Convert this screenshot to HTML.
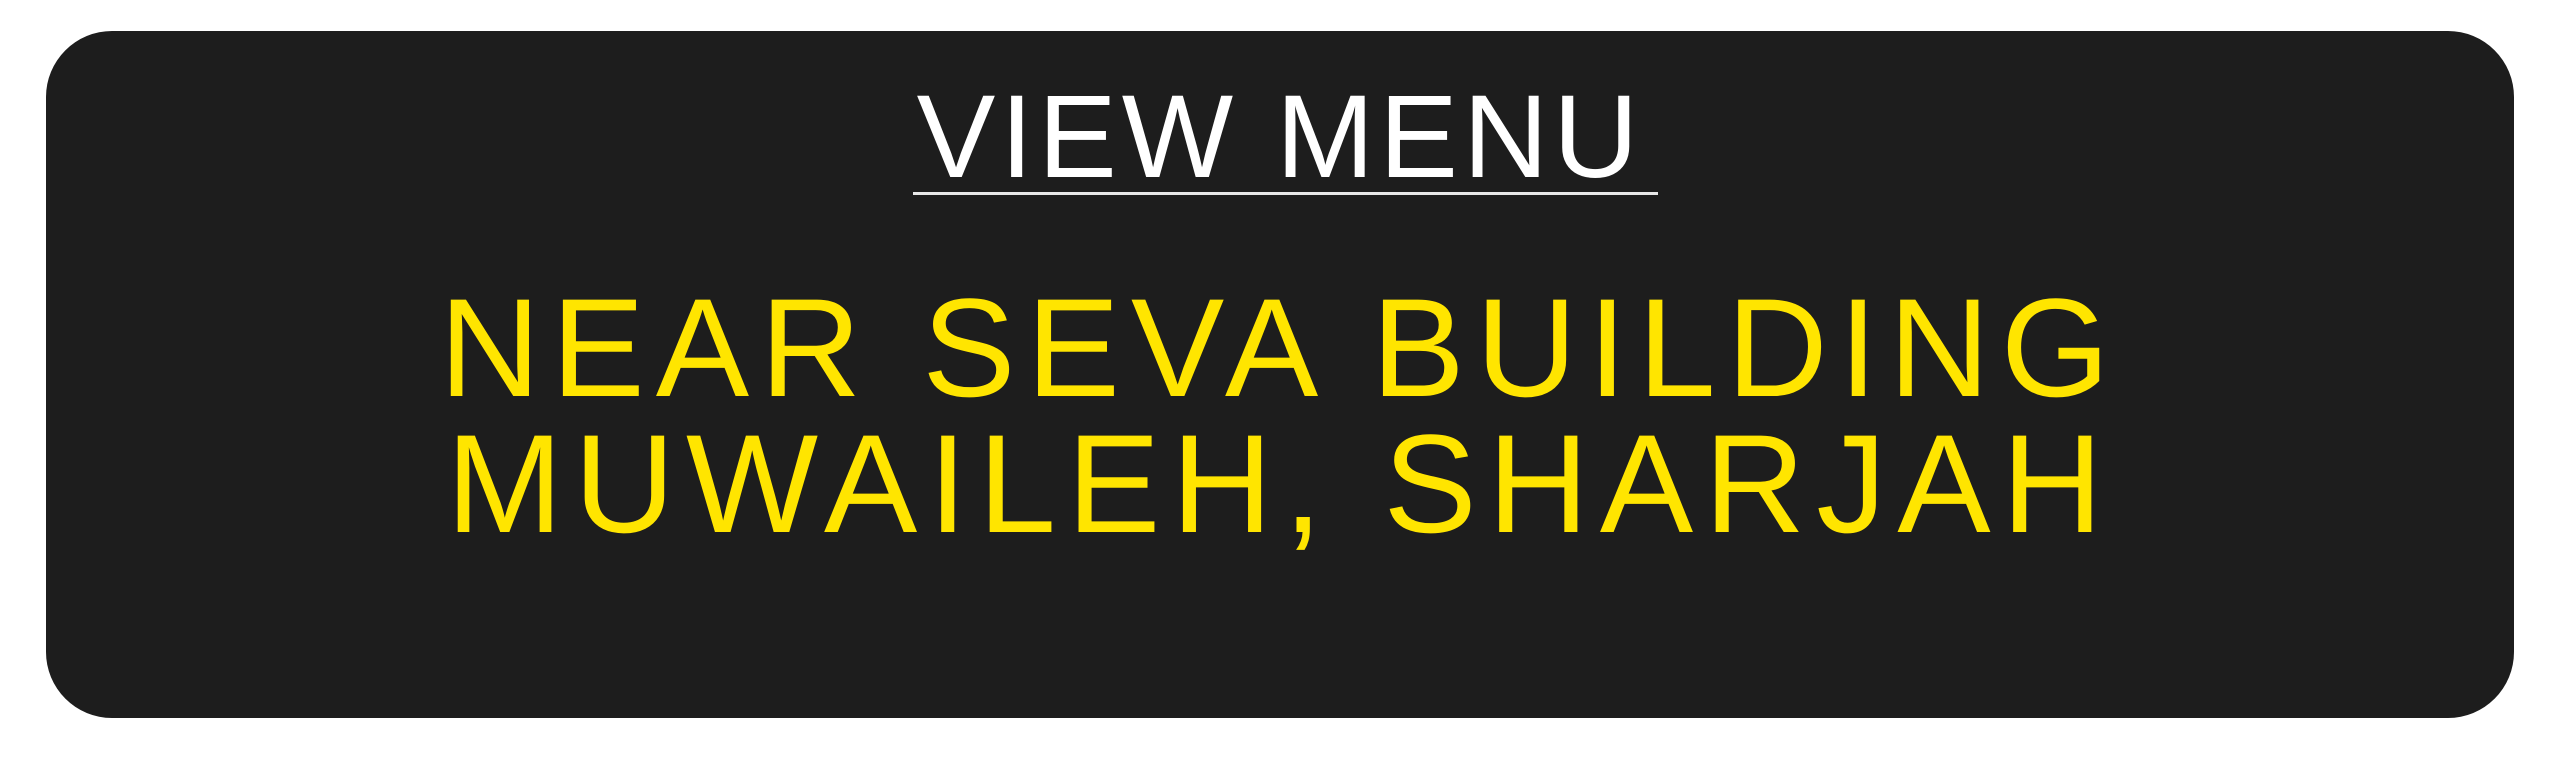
<!DOCTYPE html>
<html><head><style>
html,body{margin:0;padding:0;background:#fff;width:2560px;height:759px;overflow:hidden}
.box{position:absolute;left:46px;top:31px;width:2468px;height:687px;background:#1d1d1d;border-radius:66px}
.t{position:absolute;left:0;width:2560px;text-align:center;font-family:"Liberation Sans",sans-serif;white-space:nowrap;line-height:1}
.vm{top:78px;font-size:118px;color:#fff;letter-spacing:5px}
.ul{position:absolute;left:913px;top:192px;width:745px;height:3px;background:#e8e8e8}
.y{color:#ffe500;font-size:140px;letter-spacing:11px}
.l1{top:278px}
.l2{top:414px}
</style></head><body>
<div class="box"></div>
<div class="t vm">VIEW MENU</div>
<div class="ul"></div>
<div class="t y l1">NEAR SEVA BUILDING</div>
<div class="t y l2">MUWAILEH, SHARJAH</div>
</body></html>
